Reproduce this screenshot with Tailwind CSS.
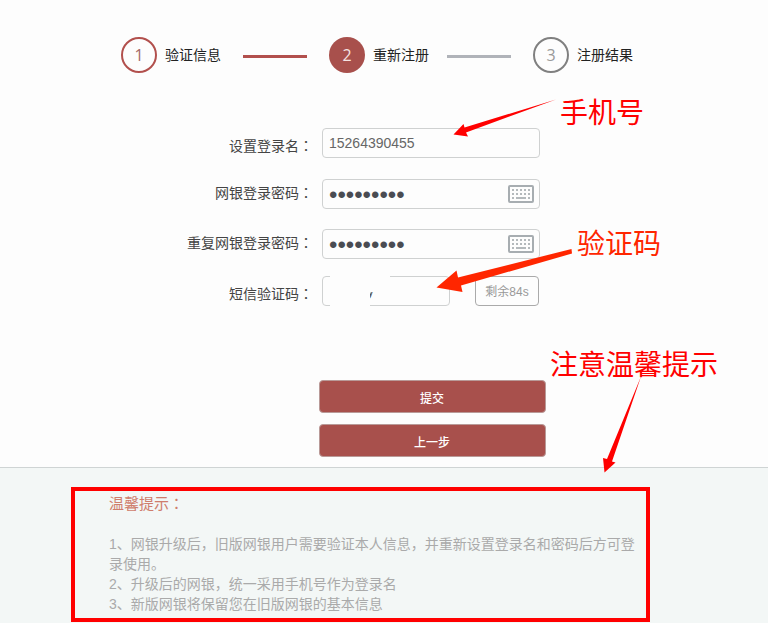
<!DOCTYPE html>
<html lang="zh-CN">
  <head>
    <meta charset="UTF-8" />
    <meta name="viewport" content="width=device-width, initial-scale=1.0" />
    <title>重新注册</title>
    <script src="https://cdn.jsdelivr.net/npm/@tailwindcss/browser@4"></script>
  </head>

  <body class="min-h-screen bg-[#f3f7f6] font-['Liberation_Sans','Noto_Sans_CJK_SC',sans-serif] text-sm text-[#444]">
    <div class="relative mx-auto max-w-3xl">
      <main class="border-b border-[#cfd4d4] bg-[#fdfdfd] pt-[37px] pb-[10px]">
        <!-- 步骤条 -->
        <ol class="flex items-center justify-center pr-[14px] text-[#222]">
          <li class="flex items-center gap-2">
            <span class="flex size-9 items-center justify-center rounded-full border-2 border-[#b2504d] font-['Open_Sans',sans-serif] text-base text-[#a56a66]">1</span>
            <span>验证信息</span>
          </li>
          <li class="mx-[22px] mt-[3px] h-[3px] w-16 bg-[#b2504d]" aria-hidden="true"></li>
          <li class="flex items-center gap-2" aria-current="step">
            <span class="flex size-9 items-center justify-center rounded-full bg-[#a8504c] font-['Open_Sans',sans-serif] text-base text-[#f6e4e2]">2</span>
            <span>重新注册</span>
          </li>
          <li class="mr-[22px] ml-[18px] mt-[3px] h-[3px] w-16 bg-[#b0b3b9]" aria-hidden="true"></li>
          <li class="flex items-center gap-2">
            <span class="flex size-9 items-center justify-center rounded-full border-2 border-[#808080] font-['Open_Sans',sans-serif] text-base text-[#999]">3</span>
            <span>注册结果</span>
          </li>
        </ol>

        <!-- 注册表单 -->
        <form id="formZhuce" class="mt-[55px]">
          <div class="flex items-center gap-[9px]">
            <label for="loginName" class="w-[313px] pt-[4px] text-right">设置登录名<span lang="zh-TW" class="font-['Noto_Sans_CJK_TC']">：</span></label>
            <input
              type="text"
              id="loginName"
              value="15264390455"
              class="h-[30px] w-[218px] rounded border border-[#cfd1d1] px-[6px] text-[#666]"
            />
          </div>

          <div class="mt-[21px] flex items-center gap-[9px]">
            <label for="password" class="w-[313px] pb-[4px] text-right">网银登录密码<span lang="zh-TW" class="font-['Noto_Sans_CJK_TC']">：</span></label>
            <div class="flex h-[30px] w-[218px] items-center rounded border border-[#cfd1d1] pr-[5px] pl-[6px]">
              <input type="password" id="password" value="123456789" class="h-[26px] min-w-0 flex-1 pt-[2px] text-2xl text-[#4a4c52] outline-none" />
              <button type="button" aria-label="软键盘">
                <svg class="h-[18px] w-[26px]" viewBox="0 0 26 18" fill="none">
                  <rect x="1" y="1" width="24" height="16" rx="1" stroke="#a7adb1" stroke-width="2" />
                  <path d="M4 5h18M4 9h18" stroke="#b4b9bc" stroke-width="2" stroke-dasharray="2 2" />
                  <path d="M4 13h2M8 13h10M20 13h2" stroke="#b4b9bc" stroke-width="2" />
                </svg>
              </button>
            </div>
          </div>

          <div class="mt-5 flex items-center gap-[9px]">
            <label for="password2" class="w-[313px] pb-[4px] text-right">重复网银登录密码<span lang="zh-TW" class="font-['Noto_Sans_CJK_TC']">：</span></label>
            <div class="flex h-[30px] w-[218px] items-center rounded border border-[#cfd1d1] pr-[5px] pl-[6px]">
              <input type="password" id="password2" value="123456789" class="h-[26px] min-w-0 flex-1 pt-[2px] text-2xl text-[#4a4c52] outline-none" />
              <button type="button" aria-label="软键盘">
                <svg class="h-[18px] w-[26px]" viewBox="0 0 26 18" fill="none">
                  <rect x="1" y="1" width="24" height="16" rx="1" stroke="#a7adb1" stroke-width="2" />
                  <path d="M4 5h18M4 9h18" stroke="#b4b9bc" stroke-width="2" stroke-dasharray="2 2" />
                  <path d="M4 13h2M8 13h10M20 13h2" stroke="#b4b9bc" stroke-width="2" />
                </svg>
              </button>
            </div>
          </div>

          <div class="mt-[17px] flex items-center gap-[9px]">
            <label for="smsCode" class="w-[313px] pt-[4px] text-right">短信验证码<span lang="zh-TW" class="font-['Noto_Sans_CJK_TC']">：</span></label>
            <div class="relative">
              <input
                type="text"
                id="smsCode"
                value="y"
                class="block h-[30px] w-32 rounded border border-[#cfd1d1] pl-[44px] text-[#555]"
              />
              <!-- 遮住验证码 -->
              <span class="absolute top-0 left-2 h-4 w-15 bg-[#fdfdfd]"></span>
              <span class="absolute top-0 left-2 h-[30px] w-10 bg-[#fdfdfd]"></span>
            </div>
            <button type="button" class="ml-4 h-[30px] w-16 rounded border border-[#aaa] pt-[2px] text-xs text-[#999]">剩余84s</button>
          </div>

          <div class="mx-auto mt-[74px] flex w-[227px] translate-x-12 flex-col gap-[11px] text-xs text-white">
            <button type="submit" class="h-[33px] rounded border border-[#b99a98] bg-[#a8504c] pt-[4px] font-medium">提交</button>
            <button type="button" class="h-[33px] rounded border border-[#b99a98] bg-[#a8504c] pt-[4px] font-medium">上一步</button>
          </div>
        </form>
      </main>

      <!-- 温馨提示 -->
      <footer class="pt-[19px] pr-[118px] pb-[2px] pl-[71px]">
        <section class="border-4 border-[#ff0000] pt-[2px] pr-2 pb-1 pl-[34px] leading-5 text-[#aaa]">
          <h2 class="mb-5 text-[15px] text-[#cf7d6c]">温馨提示<span lang="zh-TW" class="font-['Noto_Sans_CJK_TC']">：</span></h2>
          <p>1、网银升级后，旧版网银用户需要验证本人信息，并重新设置登录名和密码后方可登录使用。</p>
          <p>2、升级后的网银，统一采用手机号作为登录名</p>
          <p>3、新版网银将保留您在旧版网银的基本信息</p>
        </section>
      </footer>

      <!-- 标注 -->
      <div class="pointer-events-none absolute inset-0 text-[28px] leading-9 whitespace-nowrap text-[#ff0000]">
        <svg class="absolute top-0 left-0 h-[623px] w-[768px]" viewBox="0 0 768 623">
          <path d="M453.5 134.5 463.5 124 464.5 127.5 556 99.5 466 132.5 468 136.5Z" fill="#ff0000" />
          <path d="M436.5 287.5 456.5 270.5 458 277.5 571.5 249 572 253.5 461 285.5 462.5 292Z" fill="#ff2600" />
          <path d="M604.5 472.5 603 458 607 459 641 376.5 612 461.5 615.5 462.5Z" fill="#ff0000" />
        </svg>
        <span class="absolute top-[96px] left-[560px]">手机号</span>
        <span class="absolute top-[227px] left-[577px] text-[#ff2600]">验证码</span>
        <span class="absolute top-[348px] left-[550px]">注意温馨提示</span>
      </div>
    </div>
  </body>
</html>
